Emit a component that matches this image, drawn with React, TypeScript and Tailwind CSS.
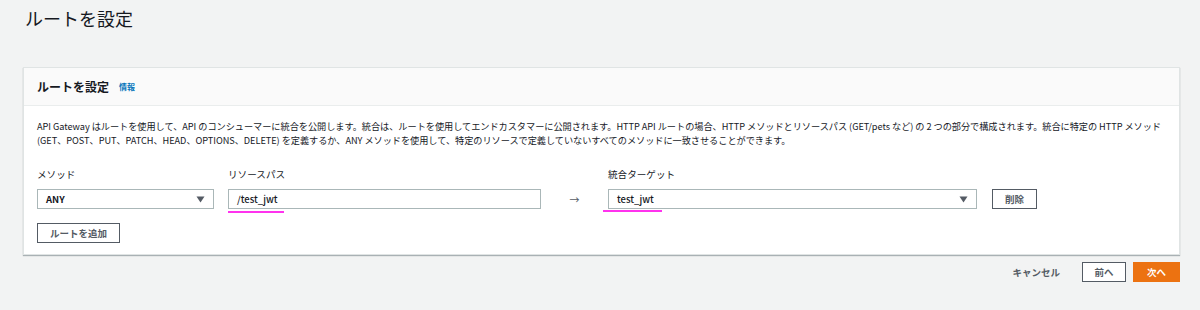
import React from "react";

const jp = '"Noto Sans CJK JP", "Noto Sans", sans-serif';

function Caret() {
  return (
    <svg width="9" height="7" viewBox="0 0 9 7" className="shrink-0">
      <path d="M0.5 0.5 L8.5 0.5 L4.5 6.5 Z" fill="#545b64" />
    </svg>
  );
}

export default function App() {
  return (
    <div
      className="w-[1200px] h-[310px] bg-[#f2f3f3] overflow-hidden text-[#16191f]"
      style={{ fontFamily: jp }}
    >
      <div className="pl-[25px] pt-[5px] h-[67px]">
        <h1 className="text-[18px] leading-[26px] text-[#16191f]">ルートを設定</h1>
      </div>

      <div className="ml-[23px] w-[1157px] bg-white border border-[#e0e4e4] shadow-[0_1px_1px_0_rgba(0,28,36,0.3)]">
        <div className="h-[38px] bg-[#fafafa] border-b border-[#eaeded] px-[13px] flex items-center gap-[10px]">
          <span className="text-[12px] font-bold leading-none">ルートを設定</span>
          <span className="text-[8px] font-bold text-[#0073bb] leading-none">情報</span>
        </div>

        <div className="px-[13px] pt-[13px] pb-[11px]">
          <p className="text-[9.2px] leading-[14px] text-[#16191f] tracking-[-0.05px]">
            API Gateway はルートを使用して、API のコンシューマーに統合を公開します。統合は、ルートを使用してエンドカスタマーに公開されます。HTTP API ルートの場合、HTTP メソッドとリソースパス (GET/pets など) の 2 つの部分で構成されます。統合に特定の HTTP メソッド
            <br />
            (GET、POST、PUT、PATCH、HEAD、OPTIONS、DELETE) を定義するか、ANY メソッドを使用して、特定のリソースで定義していないすべてのメソッドに一致させることができます。
          </p>

          <div className="mt-[20px] flex items-end">
            <div className="w-[177px] flex flex-col">
              <span className="text-[9.6px] leading-[14px] mb-[8px]">メソッド</span>
              <div className="h-[20px] border border-[#aab7b8] flex items-center justify-between pl-[8px] pr-[8px]">
                <span className="text-[9.5px] font-bold">ANY</span>
                <Caret />
              </div>
            </div>

            <div className="ml-[14px] w-[313px] flex flex-col relative">
              <span className="text-[9.6px] leading-[14px] mb-[8px]">リソースパス</span>
              <div className="h-[20px] border border-[#aab7b8] flex items-center pl-[8px]">
                <span className="text-[9.5px] font-medium">/test_jwt</span>
              </div>
              <div className="absolute left-0 top-[44px] w-[56px] h-[2px] bg-[#ff33ee]" />
            </div>

            <div className="w-[67px] h-[20px] flex items-center justify-center">
              <span className="text-[10px] text-[#545b64]">→</span>
            </div>

            <div className="w-[369px] flex flex-col relative">
              <span className="text-[9.6px] leading-[14px] mb-[8px]">統合ターゲット</span>
              <div className="h-[20px] border border-[#aab7b8] flex items-center justify-between pl-[8px] pr-[8px]">
                <span className="text-[9.5px] font-medium">test_jwt</span>
                <Caret />
              </div>
              <div className="absolute left-[-5px] top-[43px] w-[59px] h-[2px] bg-[#ff33ee]" />
            </div>

            <button className="ml-[15px] w-[45px] h-[20px] border border-[#545b64] text-[9.5px] font-bold text-[#545b64] flex items-center justify-center">
              削除
            </button>
          </div>

          <button className="mt-[14px] w-[83px] h-[20px] border border-[#545b64] text-[9.5px] font-bold text-[#545b64] flex items-center justify-center">
            ルートを追加
          </button>
        </div>
      </div>

      <div className="w-[1180px] mt-[7px] flex items-center justify-end">
        <span className="text-[9.5px] font-bold text-[#545b64] mr-[22px]">キャンセル</span>
        <button className="w-[44px] h-[20px] bg-white border border-[#545b64] text-[9.5px] font-bold text-[#545b64] flex items-center justify-center">
          前へ
        </button>
        <button className="ml-[7px] w-[47px] h-[20px] bg-[#ec7211] text-[9.5px] font-bold text-white flex items-center justify-center">
          次へ
        </button>
      </div>
    </div>
  );
}
